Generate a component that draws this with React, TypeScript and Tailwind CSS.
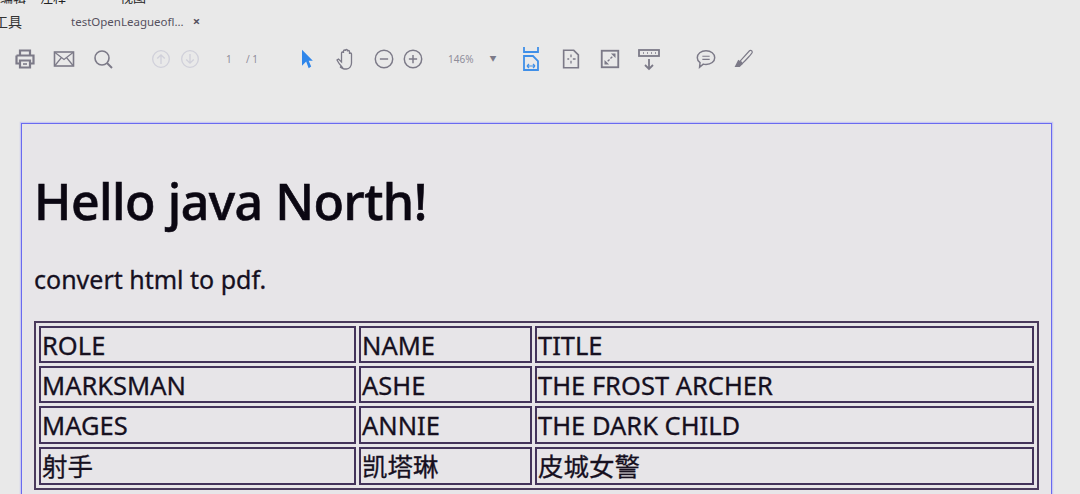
import React from 'react';

const rows = [
  { h: 'h-[37px]', cells: ['ROLE', 'NAME', 'TITLE'] },
  { h: 'h-[37px]', cells: ['MARKSMAN', 'ASHE', 'THE FROST ARCHER'] },
  { h: 'h-[38px]', cells: ['MAGES', 'ANNIE', 'THE DARK CHILD'] },
  { h: 'h-[38px]', cells: ['射手', '凯塔琳', '皮城女警'] },
];

const Icon = ({ children, className = 'w-6 h-6' }: { children: React.ReactNode; className?: string }) => (
  <svg viewBox="0 0 24 24" fill="none" stroke="currentColor" strokeWidth="1.6" className={className}>
    {children}
  </svg>
);

const App = () => {
  return (
    <div className="w-[1080px] h-[494px] overflow-hidden bg-[#e9e9e9] text-[#16101f] font-['Noto_Sans','Noto_Sans_CJK_SC',sans-serif]">
      {/* clipped menu row */}
      <div className="h-[5px] overflow-hidden">
        <div className="-mt-[10px] flex gap-[14px] text-[13px] leading-[15px] text-[#222]">
          <span>编辑</span>
          <span>注释</span>
          <span className="ml-[40px]">视图</span>
        </div>
      </div>

      {/* tabs */}
      <div className="h-[33px] flex items-center text-[#55505e]">
        <span className="-ml-[6px] w-[77px] text-[14px] text-[#333]">工具</span>
        <span className="text-[11.500px]">testOpenLeagueofl...</span>
        <span className="ml-[9px] text-[13px] font-bold">×</span>
      </div>

      {/* toolbar */}
      <div className="h-[44px] flex items-center text-[#7c7a88] -mt-[1px]">
        <div className="pl-[13px] flex items-center">
          <Icon>
            <path d="M7 8V3.500h10V8M3.500 8.500h17v8H17M7 16.500H3.500v-8" strokeWidth="2.200" />
            <path d="M7 13.500h10v7H7z" strokeWidth="2.200" />
            <path d="M10 17h4" />
          </Icon>
          <Icon className="ml-[15px] w-6 h-6">
            <rect x="2.500" y="5" width="19" height="14" />
            <path d="M3 5.500l9 7 9-7M3 18.500l6.500-8M21 18.500l-6.500-8" strokeWidth="1.200" />
          </Icon>
          <Icon className="ml-[15px] w-6 h-6">
            <circle cx="11" cy="11" r="7" />
            <path d="M16 16l5 5" strokeWidth="2" />
          </Icon>
        </div>
        <div className="ml-[36px] flex items-center gap-[9px] text-[#d0d0da]">
          <Icon className="w-5 h-5">
            <circle cx="12" cy="12" r="10" />
            <path d="M12 18V7M7.500 11.500L12 7l4.500 4.500" />
          </Icon>
          <Icon className="w-5 h-5">
            <circle cx="12" cy="12" r="10" />
            <path d="M12 6v11M7.500 12.500L12 17l4.500-4.500" />
          </Icon>
        </div>
        <span className="ml-[26px] text-[10px] w-[20px] text-[#8f8d9a]">1</span>
        <span className="text-[10px] text-[#8f8d9a]">/ 1</span>

        <svg viewBox="0 0 24 24" className="ml-[39px] w-[20px] h-[20px] text-[#2f86ea]" fill="currentColor">
          <path d="M6 1l13 13h-5l3 7-3 2-3-8-5 5z" />
        </svg>
        <Icon className="ml-[18px] w-[24px] h-[24px]">
          <path d="M7 20c-2-2-4-5-5-7l1.500-1 3 3V6a1 1 0 012 0V4a1 1 0 012 0v-.500a1 1 0 012 0V4.500a1 1 0 012 0V7a1 1 0 012 0v9c0 3-2 6-5 6h-2c-1.500 0-2.500-1-4.500-2z" strokeWidth="1.300" />
        </Icon>
        <Icon className="ml-[14px] w-[22px] h-[22px]">
          <circle cx="12" cy="12" r="9.500" />
          <path d="M7.500 12h9" />
        </Icon>
        <Icon className="ml-[7px] w-[22px] h-[22px]">
          <circle cx="12" cy="12" r="9.500" />
          <path d="M7.500 12h9M12 7.500v9" />
        </Icon>
        <span className="ml-[24px] text-[10px] text-[#8f8d9a]">146%</span>
        <span className="ml-[16px] text-[7px]">▼</span>

        <Icon className="ml-[22px] w-6 h-6 text-[#3f8fe8]">
          <path d="M5 0v5h14V0" strokeWidth="1.800" />
          <path d="M5 23V9h9l5 5v9z" strokeWidth="1.800" />
          <path d="M8 19h8M8 19l2-2M8 19l2 2M16 19l-2-2M16 19l-2 2" strokeWidth="1.200" />
        </Icon>
        <Icon className="ml-[17px] w-[22px] h-[22px]">
          <path d="M4 2.500h11l5 5v14H4z" strokeWidth="1.800" />
          <path d="M12 7v3M12 14v3M8 12h2M14 12h3" strokeWidth="1.400" />
        </Icon>
        <svg viewBox="0 0 24 24" className="ml-[17px] w-[22px] h-[22px] text-[#7c7a88]" fill="none" stroke="currentColor">
          <rect x="3" y="3" width="18" height="18" strokeWidth="2" />
          <path d="M13 6h5v5zM11 18H6v-5z" fill="currentColor" stroke="none" />
          <path d="M14.500 9.500l-2 2M9.500 14.500l2-2" strokeWidth="1.500" />
        </svg>
        <Icon className="ml-[15px] w-[26px] h-6">
          <rect x="2" y="3" width="20" height="6" strokeWidth="1.800" />
          <path d="M6 6h1M10 6h1M14 6h1M18 6h1" />
          <path d="M12 12v10M8 18l4 4 4-4" strokeWidth="1.800" />
        </Icon>
        <Icon className="ml-[33px] w-[22px] h-[22px]">
          <path d="M12 3c5.500 0 9.500 3.300 9.500 7.500S17.500 18 12 18c-1 0-2-.100-3-.400L5 21l.5-5C3.500 14.500 2.500 12.500 2.500 10.500 2.500 6.300 6.500 3 12 3z" />
          <path d="M8 9h8M8 12.500h8" strokeWidth="1.300" />
        </Icon>
        <Icon className="ml-[16px] w-[22px] h-[22px]">
          <path d="M8 14L18 3c1-1 3 0 3 1.500 0 1-7 9-11 12.500z" strokeWidth="1.300" />
          <path d="M3 20l3-6 4 3-3 3z" fill="currentColor" />
        </Icon>
      </div>

      {/* pdf page */}
      <div className="mt-[42px] ml-[21px] w-[1031px] h-[400px] border border-[#6a6af0] shadow-[0_0_1px_1px_rgba(170,170,250,0.5)] bg-[#e7e5e8] pl-[12px] pt-[43px]">
        <h1 className="text-[50px] leading-[68px] font-medium tracking-[-0.5px] text-[#0b0712] [-webkit-text-stroke:0.6px_#0b0712]">Hello java North!</h1>
        <p className="mt-[27px] text-[25px] leading-[34px] [-webkit-text-stroke:0.3px_#16101f]">convert html to pdf.</p>
        <table className="mt-[25px] w-[1005px] table-fixed border-2 border-[#4a3a5c] border-separate border-spacing-[3px] text-[25.500px] leading-[32px] [-webkit-text-stroke:0.3px_#16101f]">
          <colgroup>
            <col className="w-[317px]" />
            <col className="w-[173px]" />
            <col />
          </colgroup>
          <tbody>
            {rows.map((row) => (
              <tr key={row.cells[0]}>
                {row.cells.map((cell) => (
                  <td key={cell} className={`${row.h} border-2 border-[#43335a] pl-[1px] pr-[2px] py-0 whitespace-nowrap`}>
                    {cell}
                  </td>
                ))}
              </tr>
            ))}
          </tbody>
        </table>
      </div>
    </div>
  );
};

export default App;
